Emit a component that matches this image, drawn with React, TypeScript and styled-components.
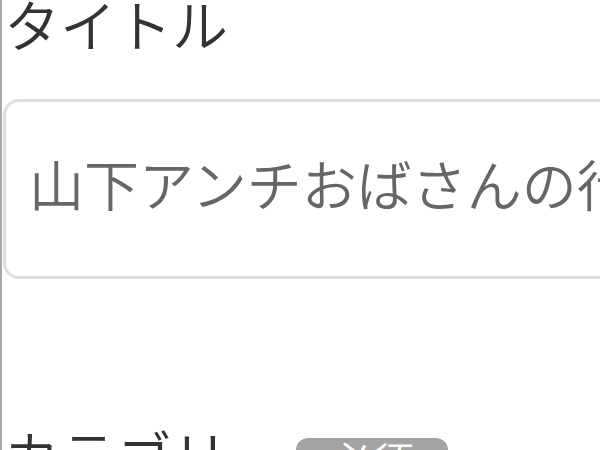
import React from "react";
import styled, { createGlobalStyle } from "styled-components";

const Global = createGlobalStyle`
  html, body { margin: 0; padding: 0; background: #ffffff; }
  body { font-family: "Noto Sans CJK JP", "Noto Sans", sans-serif; overflow: hidden; }
`;

const Page = styled.div`
  width: 600px;
  height: 450px;
  box-sizing: border-box;
  border-left: 2px solid #a8a8a8;
  padding-left: 1px;
  overflow: hidden;
  background: #fff;
`;

const Field = styled.section<{ $gap: number }>`
  display: flex;
  flex-direction: column;
  gap: ${(p) => p.$gap}px;
`;

const LabelRow = styled.div`
  display: flex;
  align-items: flex-start;
  gap: 12px;
`;

const Label = styled.div`
  font-size: 56px;
  font-weight: 350;
  line-height: 46px;
  color: #333333;
  padding-left: 1px;
  white-space: nowrap;
`;

const Badge = styled.span`
  display: inline-flex;
  justify-content: center;
  box-sizing: border-box;
  width: 152px;
  height: 60px;
  margin-top: 7px;
  padding-top: 2px;
  border-radius: 12px;
  background: #a3a3a3;
  color: #ffffff;
  font-size: 42px;
  line-height: 40px;
  font-weight: 350;
`;

const TextBox = styled.div`
  box-sizing: border-box;
  width: 640px;
  height: 180px;
  border: 3px solid #dedede;
  border-radius: 16px;
  display: flex;
  align-items: center;
  padding: 0 0 14px 23px;
  font-size: 55px;
  font-weight: 350;
  color: #666666;
  white-space: nowrap;
  overflow: hidden;
`;

const Spacer = styled.div<{ $h: number }>`
  height: ${(p) => p.$h}px;
`;

export default function App() {
  return (
    <>
      <Global />
      <Page>
        <Field $gap={53}>
          <Label>タイトル</Label>
          <TextBox>山下アンチおばさんの行動記録</TextBox>
        </Field>
        <Spacer $h={152} />
        <LabelRow>
          <Label>カテゴリー</Label>
          <Badge>必須</Badge>
        </LabelRow>
      </Page>
    </>
  );
}
